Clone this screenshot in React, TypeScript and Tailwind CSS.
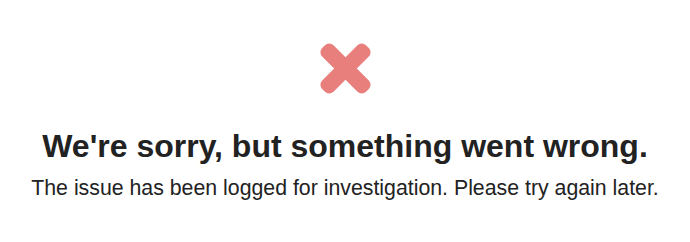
export default function App() {
  return (
    <div className="flex min-h-[242px] w-full flex-col items-center bg-white pt-[41px] text-[#222] [font-family:'Liberation_Sans',Arial,sans-serif]">
      <svg width="55" height="55" viewBox="0 0 55 55" aria-hidden="true">
        <g transform="translate(27.5 27.5) rotate(45)" fill="#e97f7d">
          <rect x="-31" y="-8" width="62" height="16" rx="6" />
          <rect x="-8" y="-31" width="16" height="62" rx="6" />
        </g>
      </svg>
      <h1 className="mt-[31px] text-[32px] font-bold leading-[38px]">We're sorry, but something went wrong.</h1>
      <p className="mt-[11px] text-[21.3px] leading-[25px]">The issue has been logged for investigation. Please try again later.</p>
    </div>
  );
}
